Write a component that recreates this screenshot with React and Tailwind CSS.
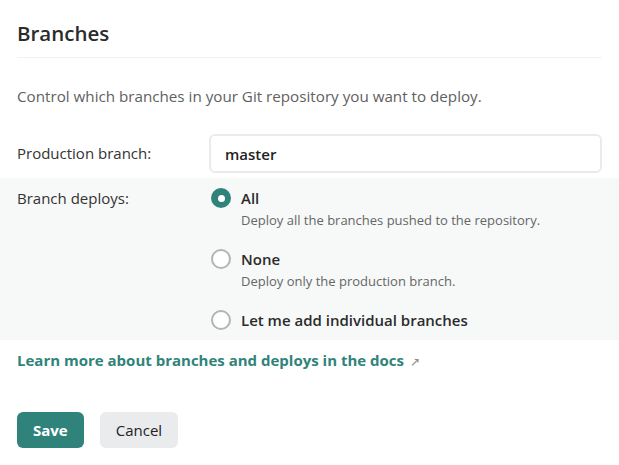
import React, { useState } from 'react';

const options = [
  { id: 'all', label: 'All', hint: 'Deploy all the branches pushed to the repository.' },
  { id: 'none', label: 'None', hint: 'Deploy only the production branch.' },
  { id: 'some', label: 'Let me add individual branches' },
];

const Radio = ({ checked }) =>
  checked ? (
    <span className="flex h-[20px] w-[20px] shrink-0 items-center justify-center rounded-full bg-[#30837a]">
      <span className="block h-[7px] w-[7px] rounded-full bg-white" />
    </span>
  ) : (
    <span className="block h-[20px] w-[20px] shrink-0 rounded-full border-2 border-[#b4b4b4] bg-white" />
  );

export default function App() {
  const [deploys, setDeploys] = useState('all');
  const [branch, setBranch] = useState('master');

  return (
    <div className="min-h-[465px] w-[619px] bg-white font-['Open_Sans',sans-serif] text-[#2b2b2b]">
      <div className="px-[17px] pt-[19px]">
        <h2 className="border-b border-[#f2f2f2] pb-[10px] text-[20.5px] leading-[28px] font-semibold">Branches</h2>
        <p className="mt-[27px] text-[15.2px] leading-[22px] text-[#616161]">
          Control which branches in your Git repository you want to deploy.
        </p>
      </div>

      {/* Production branch */}
      <div className="mt-[27px] flex items-center px-[17px]">
        <label className="w-[192px] shrink-0 text-[15px] text-[#333]">Production branch:</label>
        <input
          value={branch}
          onChange={(e) => setBranch(e.target.value)}
          className="h-[39px] flex-1 rounded-[6px] border-2 border-[#ebebeb] bg-white px-[14px] text-[15px] font-semibold text-[#222] outline-none"
        />
      </div>

      {/* Branch deploys */}
      <div className="mt-[5px] flex bg-[#f7f9f9] px-[17px] pt-[8px] pb-[8px]">
        <div className="w-[192px] shrink-0 text-[15px] leading-[24px] text-[#333]">Branch deploys:</div>
        <div className="flex flex-col gap-[17px]">
          {options.map((o) => (
            <button
              key={o.id}
              type="button"
              onClick={() => setDeploys(o.id)}
              className="flex items-start gap-[10px] text-left"
            >
              <span className="block pt-[2px] pl-[2px]">
                <Radio checked={deploys === o.id} />
              </span>
              <span className="flex flex-col">
                <span className="text-[15px] leading-[24px] font-semibold text-[#2b2b2b]">{o.label}</span>
                {o.hint && (
                  <span className="text-[13px] leading-[20px] text-[#666]">{o.hint}</span>
                )}
              </span>
            </button>
          ))}
        </div>
      </div>

      <div className="px-[17px] pt-[8px]">
        <a href="#" className="text-[15px] leading-[22px] font-bold text-[#30837a]">
          Learn more about branches and deploys in the docs
          <span className="ml-[6px] text-[12px] font-normal text-[#888]">↗</span>
        </a>
      </div>

      <div className="mt-[39px] flex gap-[16px] px-[17px]">
        <button className="h-[36px] rounded-[6px] bg-[#30837a] px-[16px] text-[15px] font-bold text-white">Save</button>
        <button className="h-[36px] rounded-[6px] bg-[#e9ebed] px-[16px] text-[15px] text-[#222]">Cancel</button>
      </div>
    </div>
  );
}
